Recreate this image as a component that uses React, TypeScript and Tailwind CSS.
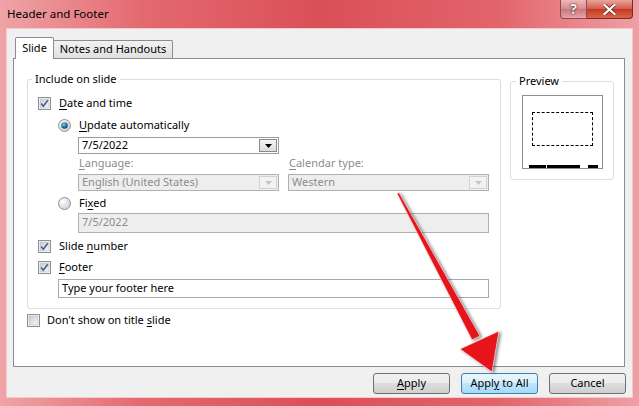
import type { ReactNode } from "react";

const font = "font-['Segoe_UI','Noto_Sans',sans-serif]";

function CheckBox({ checked }: { checked?: boolean }) {
  return (
    <svg width="13" height="13" viewBox="0 0 13 13" className="shrink-0">
      <defs>
        <linearGradient id="cbFill" x1="0" y1="0" x2="1" y2="1">
          <stop offset="0" stopColor="#c9ccd2" />
          <stop offset="1" stopColor="#f7f7f7" />
        </linearGradient>
      </defs>
      <rect x="0.5" y="0.5" width="12" height="12" fill="#fff" stroke="#8e8f8f" />
      <rect x="2" y="2" width="9" height="9" fill="url(#cbFill)" stroke="#b4b8bf" strokeWidth="0.6" />
      {checked && (
        <path d="M3.2 6.6 L5.3 9.2 L9.8 3.2" fill="none" stroke="#4a5e94" strokeWidth="1.6" />
      )}
    </svg>
  );
}

function Radio({ checked }: { checked?: boolean }) {
  return (
    <svg width="13" height="13" viewBox="0 0 13 13" className="shrink-0">
      <defs>
        <radialGradient id="rdOff" cx="0.35" cy="0.35" r="0.8">
          <stop offset="0" stopColor="#ffffff" />
          <stop offset="1" stopColor="#c8c8c8" />
        </radialGradient>
        <radialGradient id="rdDot" cx="0.4" cy="0.35" r="0.7">
          <stop offset="0" stopColor="#7fd0ee" />
          <stop offset="0.6" stopColor="#1f6f9c" />
          <stop offset="1" stopColor="#103e66" />
        </radialGradient>
      </defs>
      <circle cx="6.5" cy="6.5" r="6" fill="url(#rdOff)" stroke="#8f9296" />
      {checked && <circle cx="6.5" cy="6.5" r="3.3" fill="url(#rdDot)" />}
    </svg>
  );
}

function Combo({ value, disabled, width }: { value: string; disabled?: boolean; width: string }) {
  return (
    <div
      className={`${width} h-[17px] flex items-stretch border ${
        disabled ? "border-[#b0b0b0] bg-[#eeeeee] text-[#8c8c8c]" : "border-[#9a9da3] bg-white text-black"
      }`}
    >
      <span className="flex-1 pl-[3px] leading-[14px]">{value}</span>
      <span
        className={`w-[18px] m-[1px] flex items-center justify-center border ${
          disabled
            ? "border-[#d2d2d2] bg-[#f2f2f2]"
            : "border-[#8a8a8a] bg-[linear-gradient(#f4f4f4,#dcdcdc)]"
        }`}
      >
        <svg width="7" height="4" viewBox="0 0 7 4">
          <path d="M0 0 H7 L3.5 4 Z" fill={disabled ? "#c4c4c4" : "#000"} />
        </svg>
      </span>
    </div>
  );
}

function Key({ children }: { children: ReactNode }) {
  return <span className="underline underline-offset-[2px]">{children}</span>;
}

function Label({ children }: { children: ReactNode }) {
  return <span className="pb-[2px] leading-[13px]">{children}</span>;
}

function Button({ children, primary }: { children: ReactNode; primary?: boolean }) {
  return (
    <div
      className={`w-[77px] h-[21px] rounded-[3px] border flex items-center justify-center text-black ${
        primary
          ? "border-[#3c7fb1] bg-[linear-gradient(#eaf6fd_0%,#d9f0fc_45%,#bee6fd_50%,#a7d9f5_100%)]"
          : "border-[#707070] bg-[linear-gradient(#f2f2f2_0%,#ebebeb_45%,#dddddd_50%,#cfcfcf_100%)]"
      }`}
    >
      <span className="pb-[1px]">{children}</span>
    </div>
  );
}

export default function App() {
  return (
    <div
      className={`${font} relative w-[639px] h-[406px] overflow-hidden flex flex-col bg-[linear-gradient(90deg,#efa4a7_0%,#e36a70_22%,#db4f57_50%,#e2646b_78%,#eea0a5_100%)]`}
    >
      {/* caption bar */}
      <div className="h-[28px] flex items-start shrink-0">
        <span className="pl-[7px] pt-[5px] text-[11.5px] text-black">Header and Footer</span>
        <div className="ml-auto mr-[6px] flex">
          <div className="w-[27px] h-[19px] rounded-bl-[4px] border border-t-0 border-[#8d4b4f] bg-[linear-gradient(#f0b7ba,#d88a8f_50%,#c9767b_51%,#e5a4a8)] flex items-center justify-center">
            <span className="text-[14px] leading-[14px] font-bold text-[#f3f3f3] [text-shadow:0_0_1px_#3a2020,0_0_2px_#3a2020]">
              ?
            </span>
          </div>
          <div className="w-[46px] h-[19px] rounded-br-[4px] border border-t-0 border-l-0 border-[#7e2a24] bg-[linear-gradient(#e8a59c,#d45a4c_50%,#c2381f_51%,#d8674a)] flex items-center justify-center">
            <svg width="13" height="11" viewBox="0 0 13 11">
              <path d="M1.5 1 L11.5 10 M11.5 1 L1.5 10" stroke="#5b2420" strokeWidth="3.6" strokeLinecap="square" />
              <path d="M1.5 1 L11.5 10 M11.5 1 L1.5 10" stroke="#fff" strokeWidth="2.2" strokeLinecap="square" />
            </svg>
          </div>
        </div>
      </div>

      {/* client area */}
      <div className="flex-1 mx-[6px] mb-[8px] bg-[#f0f0f0] border border-[#f6c9cb] flex flex-col text-[11px] text-black">
        {/* tab strip */}
        <div className="mt-[8px] ml-[8px] h-[21px] flex items-end">
          <div className="relative z-10 w-[39px] h-[22px] -mb-px bg-white border border-b-0 border-[#898c95] rounded-t-[2px] flex justify-center pt-[2px]">
            Slide
          </div>
          <div className="-ml-px w-[120px] h-[18px] border border-b-0 border-[#898c95] rounded-t-[2px] bg-[linear-gradient(#f2f2f2,#e0e0e0)] flex justify-center leading-[16px]">
            Notes and Handouts
          </div>
        </div>

        {/* tab page */}
        <div className="ml-[6px] w-[612px] h-[309px] bg-white border border-[#898c95] flex flex-col">
          <div className="flex items-start">
            {/* Include on slide */}
            <div className="relative ml-[13px] mt-[20px] w-[474px] h-[230px] border border-[#d5dfe5] rounded-[3px] flex flex-col">
              <span className="absolute -top-[9px] left-[4px] bg-white px-[3px] leading-[15px]">Include on slide</span>

              <div className="mt-[17px] ml-[10px] h-[13px] flex items-center gap-[8px]">
                <CheckBox checked />
                <Label><Key>D</Key>ate and time</Label>
              </div>

              <div className="mt-[9px] ml-[30px] h-[13px] flex items-center gap-[8px]">
                <Radio checked />
                <Label><Key>U</Key>pdate automatically</Label>
              </div>

              <div className="mt-[5px] ml-[50px]">
                <Combo value="7/5/2022" width="w-[201px]" />
              </div>

              <div className="mt-[2px] ml-[50px] h-[16px] flex items-center text-[#8c8c8c]">
                <span className="w-[211px] pl-[1px] pb-[2px]"><Key>L</Key>anguage:</span>
                <span className="pb-[2px]"><Key>C</Key>alendar type:</span>
              </div>

              <div className="mt-[2px] ml-[50px] flex gap-[9px]">
                <Combo value="English (United States)" disabled width="w-[201px]" />
                <Combo value="Western" disabled width="w-[201px]" />
              </div>

              <div className="mt-[6px] ml-[30px] h-[13px] flex items-center gap-[8px]">
                <Radio />
                <Label>Fi<Key>x</Key>ed</Label>
              </div>

              <div className="mt-[3px] ml-[50px] w-[411px] h-[20px] border border-[#b0b0b0] bg-[#eeeeee] text-[#8c8c8c] pl-[3px] leading-[16px]">
                7/5/2022
              </div>

              <div className="mt-[7px] ml-[10px] h-[13px] flex items-center gap-[8px]">
                <CheckBox checked />
                <Label>Slide <Key>n</Key>umber</Label>
              </div>

              <div className="mt-[8px] ml-[10px] h-[13px] flex items-center gap-[8px]">
                <CheckBox checked />
                <Label><Key>F</Key>ooter</Label>
              </div>

              <div className="mt-[5px] ml-[30px] w-[431px] h-[19px] border border-[#a5a8ae] bg-white pl-[3px] leading-[15px]">
                Type your footer here
              </div>
            </div>

            {/* Preview */}
            <div className="relative ml-[9px] mt-[22px] w-[104px] h-[99px] border border-[#d5dfe5] rounded-[3px]">
              <span className="absolute -top-[9px] left-[5px] bg-white px-[3px] leading-[15px]">Preview</span>
              <div className="mt-[13px] ml-[11px] w-[81px] h-[74px] border border-[#8f8f8f] flex flex-col">
                <div className="mt-[16px] ml-[9px] w-[61px] h-[34px] border border-dashed border-black" />
                <div className="mt-auto ml-[6px] h-[3px] flex">
                  <div className="w-[17px] bg-black" />
                  <div className="ml-[1px] w-[33px] bg-black" />
                  <div className="ml-[8px] w-[10px] bg-black" />
                </div>
              </div>
            </div>
          </div>

          <div className="mt-[5px] ml-[13px] h-[13px] flex items-center gap-[7px]">
            <CheckBox />
            <Label>Don't show on title <Key>s</Key>lide</Label>
          </div>
        </div>

        {/* dialog buttons */}
        <div className="mt-[6px] mr-[6px] flex justify-end gap-[11px]">
          <Button><Key>A</Key>pply</Button>
          <Button primary>Appl<Key>y</Key> to All</Button>
          <Button>Cancel</Button>
        </div>
      </div>

      {/* pointer arrow drawn over the dialog */}
      <svg
        className="absolute inset-0 pointer-events-none [filter:drop-shadow(2px_1px_1.5px_rgba(0,0,0,0.45))]"
        width="639"
        height="406"
        viewBox="0 0 639 406"
      >
        <polygon
          points="397,193.5 399,192.5 480,336 472,340"
          fill="#e8141b"
          stroke="#ffffff"
          strokeWidth="0.6"
        />
        <polygon points="460,349 499,331 492,372" fill="#e8141b" stroke="#ffffff" strokeWidth="0.6" />
      </svg>
    </div>
  );
}
